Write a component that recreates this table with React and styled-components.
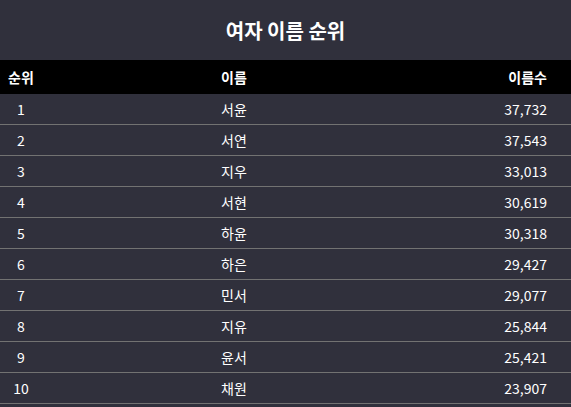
import React from "react";
import styled, { createGlobalStyle } from "styled-components";

const Global = createGlobalStyle`
  html, body { margin: 0; padding: 0; background: #30303c; }
  body { font-family: "Noto Sans CJK KR", "Noto Sans", sans-serif; color: #fff; }
`;

const Page = styled.div`
  width: 571px;
  background: #30303c;
`;

const Title = styled.h1`
  margin: 0;
  height: 60px;
  display: flex;
  align-items: center;
  justify-content: center;
  font-size: 20px;
  font-weight: 700;
  color: #fff;
`;

const Row = styled.div`
  display: grid;
  grid-template-columns: 221px 1fr 140px;
  align-items: center;
  height: ${(p) => (p.$head ? "34px" : "30px")};
  background: ${(p) => (p.$head ? "#000" : "transparent")};
  border-bottom: ${(p) => (p.$head ? "none" : "1px solid #727272")};
  font-size: 14px;
  font-weight: ${(p) => (p.$head ? 700 : 400)};
`;

const RankCell = styled.div`
  width: ${(p) => (p.$head ? "auto" : "42px")};
  padding-left: ${(p) => (p.$head ? "8px" : "0")};
  text-align: ${(p) => (p.$head ? "left" : "center")};
`;

const NameCell = styled.div`
  text-align: left;
`;

const CountCell = styled.div`
  text-align: right;
  padding-right: 24px;
`;

const data = [
  ["1", "서윤", "37,732"],
  ["2", "서연", "37,543"],
  ["3", "지우", "33,013"],
  ["4", "서현", "30,619"],
  ["5", "하윤", "30,318"],
  ["6", "하은", "29,427"],
  ["7", "민서", "29,077"],
  ["8", "지유", "25,844"],
  ["9", "윤서", "25,421"],
  ["10", "채원", "23,907"],
];

export default function App() {
  return (
    <Page>
      <Global />
      <Title>여자 이름 순위</Title>
      <Row $head>
        <RankCell $head>순위</RankCell>
        <NameCell>이름</NameCell>
        <CountCell>이름수</CountCell>
      </Row>
      {data.map(([r, n, c]) => (
        <Row key={r}>
          <RankCell>{r}</RankCell>
          <NameCell>{n}</NameCell>
          <CountCell>{c}</CountCell>
        </Row>
      ))}
    </Page>
  );
}
